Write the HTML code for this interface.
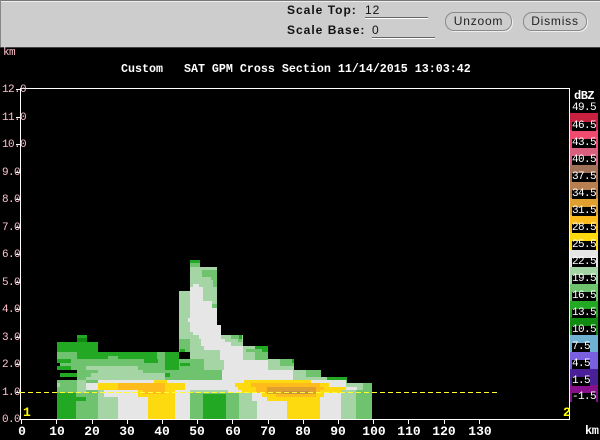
<!DOCTYPE html>
<html><head><meta charset="utf-8"><style>
html,body{margin:0;padding:0;background:#000}
#r{position:relative;width:600px;height:440px;overflow:hidden;background:#000;font-family:"Liberation Mono",monospace}
#r div.t{position:absolute;white-space:pre;line-height:12px}
.p{color:#ffc0cb;font-size:11px;left:2px;letter-spacing:-.6px}
.x{color:#fff;font-weight:bold;font-size:13px;width:40px;text-align:center;top:426px}
.l{color:#fff;font-size:11px;left:572px;width:24px;background:#000;height:9px;line-height:9px!important;letter-spacing:-.6px}
.s{font-family:"Liberation Sans",sans-serif;font-size:12px;color:#111}
.b{font-weight:bold;letter-spacing:1px}
.btn{position:absolute;top:12px;height:17px;border:1px solid #8a8a8a;border-radius:9px;box-shadow:1px 1px 0 #eee;font:12px/17px "Liberation Sans",sans-serif;color:#222;text-align:center;letter-spacing:.8px}
svg{position:absolute;left:0;top:0}
</style></head><body><div id="r">
<svg width="600" height="440" shape-rendering="crispEdges">
<rect x="0" y="0" width="600" height="47" fill="#cdcdcd"/>
<rect x="0" y="0" width="600" height="1" fill="#777"/>
<rect x="0" y="1" width="600" height="1" fill="#eee"/>
<rect x="0" y="0" width="1" height="47" fill="#888"/>
<rect x="0" y="47" width="600" height="1" fill="#444"/>
<rect x="365" y="17" width="63" height="1" fill="#666"/><rect x="365" y="18" width="63" height="1" fill="#fff"/>
<rect x="372" y="37" width="63" height="1" fill="#666"/><rect x="372" y="38" width="63" height="1" fill="#fff"/>
<!-- legend -->
<rect x="570" y="113" width="28" height="17" fill="#c8203f"/>
<rect x="570" y="130" width="28" height="18" fill="#f04a6e"/>
<rect x="570" y="148" width="28" height="17" fill="#d8607e"/>
<rect x="570" y="165" width="28" height="17" fill="#a07058"/>
<rect x="570" y="182" width="28" height="16" fill="#b88050"/>
<rect x="570" y="198" width="28" height="17" fill="#e0a030"/>
<rect x="570" y="215" width="28" height="17" fill="#fdbb1c"/>
<rect x="570" y="232" width="28" height="18" fill="#fdd90f"/>
<rect x="570" y="250" width="28" height="17" fill="#e6e6e6"/>
<rect x="570" y="267" width="28" height="17" fill="#a5d5a5"/>
<rect x="570" y="284" width="28" height="17" fill="#6fc36f"/>
<rect x="570" y="301" width="28" height="16" fill="#22a822"/>
<rect x="570" y="317" width="28" height="18" fill="#108a10"/>
<rect x="570" y="335" width="28" height="17" fill="#70b0d0"/>
<rect x="570" y="352" width="28" height="17" fill="#7a60e0"/>
<rect x="570" y="369" width="28" height="16" fill="#4a2098"/>
<rect x="570" y="385" width="28" height="17" fill="#88108a"/>
<!-- left base -->
<g fill="#6fc36f">
<rect x="57" y="352" width="133" height="28"/>
<rect x="57" y="380" width="20" height="13"/>
<rect x="77" y="380" width="21" height="13"/>
<rect x="179" y="339" width="11" height="13"/>
</g>
<g fill="#22a822">
<rect x="77" y="335" width="10" height="7"/>
<rect x="57" y="342" width="41" height="10"/>
<rect x="77" y="352" width="31" height="7"/>
<rect x="108" y="352" width="10" height="4"/>
<rect x="118" y="352" width="39" height="7"/>
<rect x="144" y="359" width="14" height="4"/>
<rect x="165" y="352" width="14" height="18"/>
<rect x="180" y="349" width="5" height="3"/>
<rect x="180" y="363" width="10" height="3"/>
<rect x="57" y="359" width="14" height="4"/>
<rect x="57" y="366" width="14" height="4"/>
<rect x="60" y="373" width="17" height="4"/>
<rect x="165" y="373" width="5" height="4"/>
</g>
<rect x="77" y="338" width="10" height="4" fill="#108a10"/>
<rect x="57" y="352" width="20" height="7" fill="#6fc36f"/>
<rect x="179" y="352" width="11" height="7" fill="#000"/>
<g fill="#000">
<rect x="57" y="363" width="3" height="3"/>
<rect x="57" y="370" width="20" height="3"/>
<rect x="57" y="373" width="3" height="4"/>
<rect x="57" y="377" width="20" height="3"/>
</g>
<g fill="#a5d5a5">
<rect x="86" y="366" width="52" height="4"/>
<rect x="98" y="370" width="45" height="3"/>
<rect x="91" y="373" width="54" height="4"/>
<rect x="86" y="377" width="71" height="3"/>
<rect x="143" y="373" width="22" height="7"/>
<rect x="57" y="383" width="3" height="4"/>
<rect x="77" y="380" width="9" height="13"/>
</g>
<!-- peak mass -->
<g fill="#a5d5a5">
<rect x="179" y="291" width="11" height="48"/>
<rect x="190" y="267" width="27" height="68"/>
<rect x="190" y="335" width="53" height="25"/>
</g>
<g fill="#6fc36f">
<rect x="190" y="263" width="10" height="4"/>
<rect x="202" y="270" width="15" height="7"/>
<rect x="211" y="277" width="6" height="3"/>
<rect x="213" y="280" width="4" height="7"/>
<rect x="211" y="304" width="6" height="4"/>
<rect x="231" y="335" width="10" height="4"/>
<rect x="238" y="339" width="4" height="3"/>
<rect x="190" y="359" width="14" height="11"/>
<rect x="180" y="370" width="42" height="10"/>
</g>
<rect x="204" y="359" width="20" height="11" fill="#a5d5a5"/>
<rect x="190" y="260" width="10" height="3" fill="#22a822"/>
<rect x="239" y="335" width="3" height="4" fill="#22a822"/>
<!-- right stairs -->
<g fill="#a5d5a5">
<rect x="243" y="346" width="25" height="14"/>
<rect x="267" y="359" width="27" height="11"/>
<rect x="293" y="370" width="28" height="10"/>
<rect x="321" y="377" width="6" height="3"/>
<rect x="346" y="383" width="26" height="7"/>
<rect x="341" y="390" width="15" height="29"/>
</g>
<g fill="#6fc36f">
<rect x="246" y="349" width="16" height="3"/>
<rect x="255" y="352" width="13" height="8"/>
<rect x="280" y="359" width="14" height="7"/>
<rect x="306" y="370" width="15" height="7"/>
<rect x="332" y="380" width="15" height="3"/>
<rect x="363" y="383" width="9" height="7"/>
</g>
<g fill="#22a822">
<rect x="255" y="346" width="13" height="3"/>
<rect x="262" y="349" width="6" height="3"/>
<rect x="292" y="359" width="2" height="4"/>
<rect x="327" y="377" width="20" height="3"/>
</g>
<!-- white peak -->
<g fill="#e6e6e6">
<rect x="193" y="284" width="6" height="3"/>
<rect x="190" y="287" width="13" height="14"/>
<rect x="190" y="301" width="22" height="7"/>
<rect x="190" y="308" width="27" height="17"/>
<rect x="188" y="318" width="2" height="4"/>
<rect x="190" y="325" width="31" height="7"/>
<rect x="193" y="332" width="28" height="3"/>
<rect x="199" y="335" width="22" height="4"/>
<rect x="201" y="339" width="24" height="3"/>
<rect x="201" y="342" width="30" height="4"/>
<rect x="204" y="346" width="39" height="4"/>
<rect x="220" y="350" width="23" height="10"/>
<rect x="224" y="360" width="44" height="10"/>
<rect x="222" y="370" width="71" height="10"/>
</g>
<!-- bands left -->
<rect x="98" y="380" width="92" height="3" fill="#e6e6e6"/>
<rect x="154" y="380" width="13" height="3" fill="#fdd90f"/>
<rect x="86" y="383" width="12" height="7" fill="#e6e6e6"/>
<rect x="86" y="390" width="12" height="3" fill="#6fc36f"/>
<rect x="98" y="383" width="87" height="7" fill="#fdd90f"/>
<rect x="118" y="383" width="47" height="7" fill="#fdbb1c"/>
<rect x="185" y="383" width="5" height="7" fill="#e6e6e6"/>
<rect x="98" y="390" width="20" height="29" fill="#a5d5a5"/>
<rect x="104" y="390" width="34" height="7" fill="#e6e6e6"/>
<rect x="138" y="390" width="37" height="7" fill="#fdd90f"/>
<rect x="143" y="390" width="22" height="4" fill="#fdbb1c"/>
<rect x="175" y="390" width="15" height="29" fill="#e6e6e6"/>
<!-- bands right -->
<rect x="190" y="380" width="54" height="3" fill="#e6e6e6"/>
<rect x="190" y="383" width="45" height="7" fill="#e6e6e6"/>
<rect x="190" y="390" width="52" height="3" fill="#a5d5a5"/>
<rect x="228" y="387" width="24" height="6" fill="#e6e6e6"/>
<rect x="311" y="380" width="35" height="3" fill="#e6e6e6"/>
<rect x="329" y="383" width="17" height="4" fill="#e6e6e6"/>
<rect x="346" y="387" width="11" height="3" fill="#e6e6e6"/>
<rect x="244" y="380" width="67" height="3" fill="#fdd90f"/>
<rect x="235" y="383" width="94" height="4" fill="#fdd90f"/>
<rect x="238" y="387" width="108" height="3" fill="#fdd90f"/>
<rect x="242" y="390" width="99" height="3" fill="#fdd90f"/>
<rect x="262" y="393" width="62" height="4" fill="#fdd90f"/>
<rect x="267" y="397" width="53" height="4" fill="#fdd90f"/>
<rect x="251" y="383" width="69" height="4" fill="#fdbb1c"/>
<rect x="256" y="387" width="68" height="3" fill="#fdbb1c"/>
<rect x="256" y="390" width="64" height="3" fill="#fdbb1c"/>
<rect x="276" y="393" width="40" height="4" fill="#fdbb1c"/>
<rect x="267" y="387" width="49" height="7" fill="#e0a030"/>
<rect x="283" y="391" width="26" height="3" fill="#c89040"/>
<!-- ground columns -->
<rect x="57" y="393" width="19" height="26" fill="#22a822"/>
<rect x="76" y="393" width="22" height="26" fill="#6fc36f"/>
<rect x="76" y="397" width="10" height="4" fill="#22a822"/>
<rect x="118" y="397" width="30" height="22" fill="#e6e6e6"/>
<rect x="148" y="397" width="27" height="22" fill="#fdd90f"/>
<rect x="190" y="393" width="49" height="26" fill="#6fc36f"/>
<rect x="203" y="394" width="23" height="25" fill="#22a822"/>
<rect x="239" y="393" width="13" height="26" fill="#a5d5a5"/>
<rect x="252" y="393" width="10" height="8" fill="#e6e6e6"/>
<rect x="262" y="397" width="5" height="4" fill="#e6e6e6"/>
<rect x="252" y="401" width="5" height="18" fill="#a5d5a5"/>
<rect x="257" y="401" width="30" height="18" fill="#e6e6e6"/>
<rect x="287" y="401" width="33" height="18" fill="#fdd90f"/>
<rect x="320" y="397" width="21" height="22" fill="#e6e6e6"/>
<rect x="324" y="393" width="17" height="4" fill="#e6e6e6"/>
<rect x="356" y="390" width="16" height="29" fill="#6fc36f"/>
<!-- axes -->
<rect x="20" y="88" width="550" height="1" fill="#fff"/>
<rect x="20" y="88" width="1" height="332" fill="#fff"/>
<rect x="569" y="88" width="1" height="332" fill="#fff"/>
<rect x="20" y="419" width="550" height="1" fill="#fff"/>
<g fill="#fff">
<rect x="21" y="420" width="1" height="4"/><rect x="56" y="420" width="1" height="4"/><rect x="92" y="420" width="1" height="4"/><rect x="127" y="420" width="1" height="4"/><rect x="162" y="420" width="1" height="4"/><rect x="197" y="420" width="1" height="4"/><rect x="232" y="420" width="1" height="4"/><rect x="268" y="420" width="1" height="4"/><rect x="303" y="420" width="1" height="4"/><rect x="338" y="420" width="1" height="4"/><rect x="373" y="420" width="1" height="4"/><rect x="408" y="420" width="1" height="4"/><rect x="444" y="420" width="1" height="4"/><rect x="479" y="420" width="1" height="4"/>
</g>
<g fill="#fff">
<rect x="16" y="89" width="4" height="1"/><rect x="16" y="117" width="4" height="1"/><rect x="16" y="144" width="4" height="1"/><rect x="16" y="172" width="4" height="1"/><rect x="16" y="199" width="4" height="1"/><rect x="16" y="227" width="4" height="1"/><rect x="16" y="254" width="4" height="1"/><rect x="16" y="282" width="4" height="1"/><rect x="16" y="309" width="4" height="1"/><rect x="16" y="337" width="4" height="1"/><rect x="16" y="364" width="4" height="1"/><rect x="16" y="392" width="4" height="1"/>
</g>
<line x1="20" y1="392.5" x2="497" y2="392.5" stroke="#ffff33" stroke-width="1" stroke-dasharray="5,3"/>
</svg>
<div class="t s b" style="left:287px;top:4px">Scale Top:</div>
<div class="t s" style="left:365px;top:4px;letter-spacing:1px">12</div>
<div class="t s b" style="left:287px;top:24px">Scale Base:</div>
<div class="t s" style="left:372px;top:24px">0</div>
<div class="btn" style="left:445px;width:65px">Unzoom</div>
<div class="btn" style="left:523px;width:62px">Dismiss</div>
<div class="t" style="left:121px;top:63px;color:#fff;font-weight:bold;font-size:11.67px">Custom   SAT GPM Cross Section 11/14/2015 13:03:42</div>
<div class="t p" style="left:3px;top:47px">km</div>
<div class="t p" style="top:84px">12.0</div><div class="t p" style="top:112px">11.0</div><div class="t p" style="top:139px">10.0</div><div class="t p" style="top:167px">9.0</div><div class="t p" style="top:194px">8.0</div><div class="t p" style="top:222px">7.0</div><div class="t p" style="top:249px">6.0</div><div class="t p" style="top:277px">5.0</div><div class="t p" style="top:304px">4.0</div><div class="t p" style="top:332px">3.0</div><div class="t p" style="top:359px">2.0</div><div class="t p" style="top:387px">1.0</div><div class="t p" style="top:414px">0.0</div>
<div class="t x" style="left:2px">0</div><div class="t x" style="left:37px">10</div><div class="t x" style="left:72px">20</div><div class="t x" style="left:107px">30</div><div class="t x" style="left:142px">40</div><div class="t x" style="left:177px">50</div><div class="t x" style="left:213px">60</div><div class="t x" style="left:248px">70</div><div class="t x" style="left:283px">80</div><div class="t x" style="left:318px">90</div><div class="t x" style="left:354px">100</div><div class="t x" style="left:389px">110</div><div class="t x" style="left:424px">120</div><div class="t x" style="left:460px">130</div>
<div class="t" style="left:23px;top:407px;color:#ff0;font-weight:bold;font-size:13px">1</div>
<div class="t" style="left:563px;top:407px;color:#ff0;font-weight:bold;font-size:13px">2</div>
<div class="t" style="left:574px;top:90px;color:#fff;font-weight:bold;font-size:12px;letter-spacing:-.5px">dBZ</div>
<div class="t l" style="top:104px">49.5</div><div class="t l" style="top:122px">46.5</div><div class="t l" style="top:139px">43.5</div><div class="t l" style="top:156px">40.5</div><div class="t l" style="top:173px">37.5</div><div class="t l" style="top:190px">34.5</div><div class="t l" style="top:207px">31.5</div><div class="t l" style="top:224px">28.5</div><div class="t l" style="top:241px">25.5</div><div class="t l" style="top:258px">22.5</div><div class="t l" style="top:275px">19.5</div><div class="t l" style="top:292px">16.5</div><div class="t l" style="top:309px">13.5</div><div class="t l" style="top:326px">10.5</div><div class="t l" style="top:343px;width:18px">7.5</div><div class="t l" style="top:360px;width:18px">4.5</div><div class="t l" style="top:377px;width:18px">1.5</div><div class="t l" style="top:393px">-1.5</div>
<div class="t" style="left:585px;top:425px;color:#fff;font-weight:bold;font-size:12px;letter-spacing:-.5px">km</div>
</div></body></html>
